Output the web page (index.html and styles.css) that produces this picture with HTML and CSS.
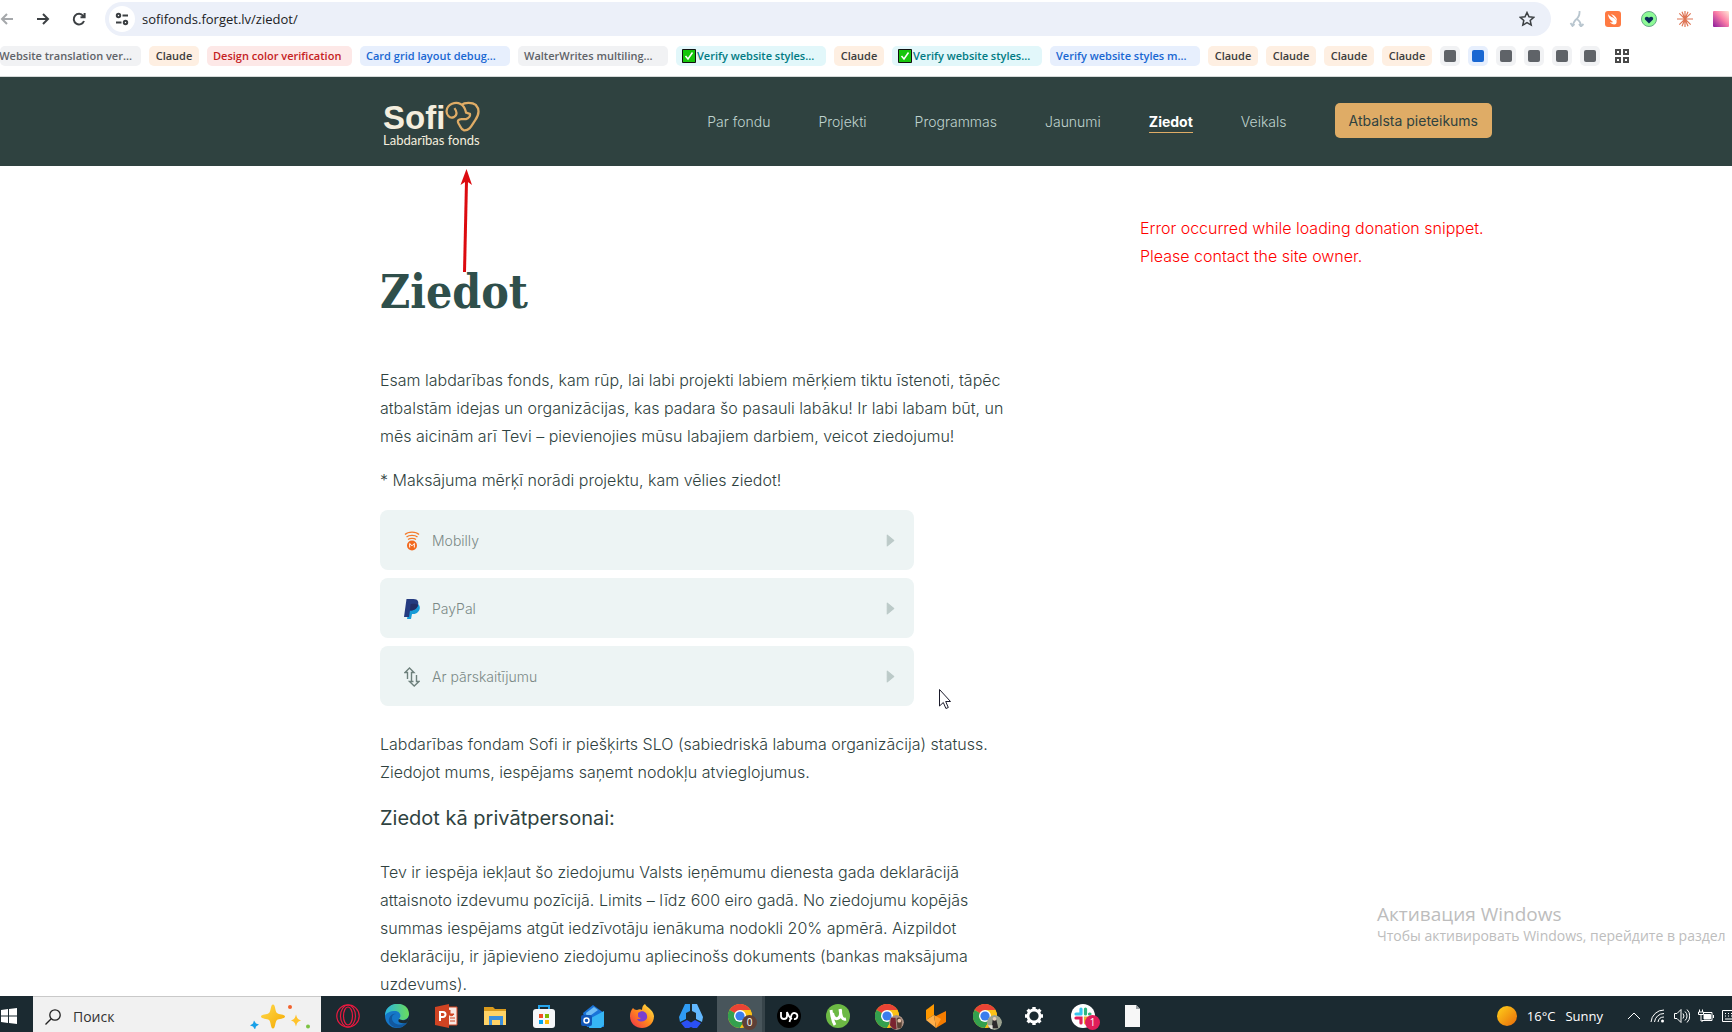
FILE: index.html
```html
<!DOCTYPE html>
<html lang="lv">
<head>
<meta charset="utf-8">
<title>Ziedot</title>
<link rel="stylesheet" href="styles.css">
</head>
<body>
<svg class="defs" aria-hidden="true">
  <defs>
    <linearGradient id="sun" x1="0" y1="0" x2="1" y2="1"><stop offset="0" stop-color="#ffd21a"/><stop offset="1" stop-color="#e86a0a"/></linearGradient>
    <linearGradient id="gold" x1="0" y1="0" x2="1" y2="1"><stop offset="0" stop-color="#ffdb4d"/><stop offset="1" stop-color="#f5a800"/></linearGradient>
    <linearGradient id="pink" x1="1" y1="0" x2="0" y2="1"><stop offset="0" stop-color="#ffe9d6"/><stop offset=".45" stop-color="#fb7ea6"/><stop offset="1" stop-color="#8a1a9c"/></linearGradient>
    <linearGradient id="fox" x1="1" y1="0" x2="0" y2="1"><stop offset="0" stop-color="#fff04a"/><stop offset=".5" stop-color="#ff8a1c"/><stop offset="1" stop-color="#f0284f"/></linearGradient>
    <linearGradient id="edge" x1="0" y1="0" x2="1" y2="0"><stop offset="0" stop-color="#28b4e0"/><stop offset="1" stop-color="#6bdc5a"/></linearGradient>
    <symbol id="chrome" viewBox="0 0 24 24">
      <circle cx="12" cy="12" r="12" fill="#fbc116"/>
      <path d="M12 12 1.6 6A12 12 0 0 1 22.4 6H12z" fill="#ea4335"/>
      <path d="M1.6 6A12 12 0 0 0 12 24l5.2-9-5.2-3z" fill="#34a04e"/>
      <path d="M12 6h10.4A12 12 0 0 1 12 24l5.2-9z" fill="#fbc116"/>
      <circle cx="12" cy="12" r="6" fill="#fff"/><circle cx="12" cy="12" r="4.6" fill="#3b7ded"/>
    </symbol>
  </defs>
</svg>

<header class="browser">
  <div class="toolbar">
    <button class="tool back" aria-label="Back"><svg viewBox="0 0 16 16"><path d="M13 8H2M7 3 2 8l5 5"/></svg></button>
    <button class="tool" aria-label="Forward"><svg viewBox="0 0 16 16"><path d="M1 8h11M7 3l5 5-5 5"/></svg></button>
    <button class="tool" aria-label="Reload"><svg viewBox="0 0 16 16"><path d="M12 10a5.300 5.300 0 1 1-.8-5.200L12.600 6M12.600 2v4.300H8.500"/></svg></button>
    <div class="omnibox">
      <button class="site" aria-label="Site information"><svg viewBox="0 0 14 14"><circle cx="3.500" cy="3.500" r="1.700"/><path d="M7.500 3.500H13M1 10.500h5.500"/><circle cx="10.500" cy="10.500" r="1.700"/></svg></button>
      <input class="url" type="text" aria-label="Address" value="sofifonds.forget.lv/ziedot/">
      <button class="star" aria-label="Bookmark"><svg viewBox="0 0 16 16"><path d="m8 1.500 2 4.300 4.700.5-3.500 3.200 1 4.600L8 11.700l-4.200 2.400 1-4.600L1.300 6.300 6 5.800z"/></svg></button>
    </div>
    <div class="extensions">
      <svg viewBox="0 0 16 16"><path d="M10.500 0C11 5 9 7 6.500 9c-1.500 1.500-2 3-3 5.500M7.500 8c2 1 4 3 4.500 6.500M1.500 12l2 3 2-2M10 13l2 2.500 2.500-2.500" fill="none" stroke="#b9c6cf" stroke-width="1.800"/></svg>
      <svg viewBox="0 0 16 16"><rect width="16" height="16" rx="3" fill="#ff7a42"/><path d="M3 3c2 3 5 3 7 5 2 1.500 2 3 1 5-2 1-5 0-6-2 1.500.5 2.500.5 3 0C5 9 3 6 3 3zM6 3c3 1 6 3 6 7-1-2-4-4-6-7z" fill="#fff"/></svg>
      <svg viewBox="0 0 16 16"><circle cx="8" cy="8" r="7.500" fill="#8dfa96" stroke="#6aa88a"/><path d="M8 12.500 4 8.500c-1-2.500 2-4 4-1.800 2-2.200 5-.7 4 1.800z" fill="#0b2a5a"/></svg>
      <svg viewBox="0 0 16 16"><path d="M8 0v16M0 8h16M2.300 2.300l11.400 11.400M13.700 2.300 2.300 13.700M5 .8l6 14.400M11 .8 5 15.200" stroke="#de7454" stroke-width="1.200"/></svg>
      <svg viewBox="0 0 16 16"><rect width="16" height="16" rx="1" fill="url(#pink)"/></svg>
    </div>
  </div>
  <nav class="tabs" aria-label="Tab groups">
    <button class="chip first">Website translation ver...</button>
    <button class="chip claude">Claude</button>
    <button class="chip red">Design color verification</button>
    <button class="chip wide blue">Card grid layout debug...</button>
    <button class="chip wide">WalterWrites multiling...</button>
    <button class="chip wide teal"><svg viewBox="0 0 14 14"><path d="M.5.500h13v13H.5z"/><path d="m3.500 7 2.500 3 4.500-6.500"/></svg>Verify website styles...</button>
    <button class="chip claude">Claude</button>
    <button class="chip wide teal"><svg viewBox="0 0 14 14"><path d="M.5.500h13v13H.5z"/><path d="m3.500 7 2.500 3 4.500-6.500"/></svg>Verify website styles...</button>
    <button class="chip wide blue">Verify website styles m...</button>
    <button class="chip claude">Claude</button>
    <button class="chip claude">Claude</button>
    <button class="chip claude">Claude</button>
    <button class="chip claude">Claude</button>
    <button class="chip dot" aria-label="Group 1"></button>
    <button class="chip dot blue" aria-label="Group 2"></button>
    <button class="chip dot" aria-label="Group 3"></button>
    <button class="chip dot" aria-label="Group 4"></button>
    <button class="chip dot" aria-label="Group 5"></button>
    <button class="chip dot" aria-label="Group 6"></button>
    <button class="all" aria-label="All groups"><svg viewBox="0 0 14 14"><path d="M1 1h4v4H1zM9 1h4v4H9zM1 9h4v4H1zM9 9h4v4H9z"/></svg></button>
  </nav>
</header>

<div class="page">
  <header class="masthead">
    <a class="logo" href="#">
      <span class="mark">Sofi<svg viewBox="0 0 108 96"><path d="M29 22c8 10 10 22-2 28C14 56 3 42 5 29 8 9 32 1 48 9c14 7 14 17 17 27l12 4c3 12-12 18-24 16-12-1-16 6-11 14 6 8 6 18 17 21 18 1 24-17 34-31 12-17 14-35 2-48C84 3 60 4 51 12"/></svg></span>
      <span class="tagline">Labdarības fonds</span>
    </a>
    <nav class="menu">
      <a href="#">Par fondu</a>
      <a href="#">Projekti</a>
      <a href="#">Programmas</a>
      <a href="#">Jaunumi</a>
      <a href="#" class="current">Ziedot</a>
      <a href="#">Veikals</a>
      <a href="#" class="apply">Atbalsta pieteikums</a>
    </nav>
  </header>

  <main class="content">
    <article>
      <h1>Ziedot</h1>
      <p>Esam labdarības fonds, kam rūp, lai labi projekti labiem mērķiem tiktu īstenoti, tāpēc atbalstām idejas un organizācijas, kas padara šo pasauli labāku! Ir labi labam būt, un mēs aicinām arī Tevi – pievienojies mūsu labajiem darbiem, veicot ziedojumu!</p>
      <p>* Maksājuma mērķī norādi projektu, kam vēlies ziedot!</p>
      <div class="methods">
        <button class="method">
          <svg class="brand" viewBox="0 0 16 20"><path d="M1 3.500C4 .3 12 .3 15 3.500M2.500 6C5 3.800 11 3.800 13.500 6M4 8.500c2-1.500 6-1.500 8 0" fill="none" stroke="#f47a2a" stroke-width="1.300"/><circle cx="8" cy="14.500" r="5" fill="#f26a1f"/><path d="M5.700 16.500v-4L8 14.800l2.300-2.300v4" fill="none" stroke="#fff" stroke-width="1"/></svg>
          <span>Mobilly</span>
          <svg class="caret" viewBox="0 0 8 12"><path d="M1 1v10l6-5z"/></svg>
        </button>
        <button class="method">
          <svg class="brand" viewBox="0 0 16 20"><path d="M6 5h8c4 3 1 10-5 10H8l-1 5H3z" fill="#179bd7"/><path d="M2.500 0h7C14 0 15 3 14 6c-1 4-4 5.500-8 5.500L5 18H0z" fill="#253b80"/><path d="M6.500 5.200C9 4.500 12 4.600 14 6c-1 4-4 5.500-8 5.500z" fill="#222d65"/></svg>
          <span>PayPal</span>
          <svg class="caret" viewBox="0 0 8 12"><path d="M1 1v10l6-5z"/></svg>
        </button>
        <button class="method">
          <svg class="brand" viewBox="0 0 16 20"><path d="M3.500 12V5.500H1L5.500 1 10 5.500H7.500V14.500H5.500l4.700 4.500 4.800-4.500h-2.500V8M9.500 14.500H7.500" fill="none" stroke="#6e807c" stroke-width="1.400"/></svg>
          <span>Ar pārskaitījumu</span>
          <svg class="caret" viewBox="0 0 8 12"><path d="M1 1v10l6-5z"/></svg>
        </button>
      </div>
      <p>Labdarības fondam Sofi ir piešķirts SLO (sabiedriskā labuma organizācija) statuss. Ziedojot mums, iespējams saņemt nodokļu atvieglojumus.</p>
      <h2>Ziedot kā privātpersonai:</h2>
      <p>Tev ir iespēja iekļaut šo ziedojumu Valsts ieņēmumu dienesta gada deklarācijā attaisnoto izdevumu pozīcijā. Limits – līdz 600 eiro gadā. No ziedojumu kopējās summas iespējams atgūt iedzīvotāju ienākuma nodokli 20% apmērā. Aizpildot deklarāciju, ir jāpievieno ziedojumu apliecinošs dokuments (bankas maksājuma uzdevums).</p>
    </article>
    <aside class="error">Error occurred while loading donation snippet. Please contact the site owner.</aside>
  </main>

  <svg class="arrow" viewBox="0 0 12 104"><path d="M4.500 103 6.500 12" stroke="#dc0a0f" stroke-width="3"/><path d="M6.500 0 12 16 6.500 12 .5 16z" fill="#dc0a0f"/></svg>
  <svg class="cursor" viewBox="0 0 12 20"><path d="M.5.500v16.500l3.800-3.500 2.600 6 2.400-1-2.600-6H11.500z" fill="#fff" stroke="#1a1a2a"/></svg>
  <div class="activation"><strong>Активация Windows</strong><span>Чтобы активировать Windows, перейдите в раздел</span></div>
</div>

<footer class="taskbar">
  <button class="start" aria-label="Start"><svg viewBox="0 0 16 16"><path d="M0 2l7-1v6.500H0zM8 1l8-1v7.500H8zM0 8.500h7V15l-7-1zM8 8.500h8V16l-8-1z" fill="#fff"/></svg></button>
  <label class="search">
    <svg class="lens" viewBox="0 0 16 16"><circle cx="10" cy="6" r="5.200"/><path d="M6.200 9.800.5 15.500"/></svg>
    <input type="text" placeholder="Поиск" aria-label="Поиск">
    <svg class="sparkle" viewBox="0 0 60 24"><path d="M23 0c2.500 0 2 7 4 8.500 1.500 2 8 1 8 3.500s-6.500 2-8 3.500C25 17 25.500 24 23 24s-2-7-4-8.500C17.500 14 11 14.500 11 12s6.500-1.500 8-3.500C21 7 20.500 0 23 0z" fill="url(#gold)"/><path d="M46 10c1 4 2 5 5 6-3 1-4 2-5 6-1-4-2-5-5-6 3-1 4-2 5-6z" fill="#ffc32b"/><path d="m4 16 2 3 3 1-3 2-1 3-2-3-3-1 3-2z" fill="#18a0e8"/><circle cx="40" cy="2.500" r="2" fill="#f2622e"/><circle cx="58" cy="22" r="2" fill="#7cc242"/></svg>
  </label>
  <div class="apps">
    <button aria-label="Opera"><svg viewBox="0 0 24 24"><g fill="none" stroke="#e8193f" stroke-width="1.200"><circle cx="12" cy="12" r="11.200"/><ellipse cx="12" cy="12" rx="7.500" ry="11"/><ellipse cx="12" cy="12" rx="4.500" ry="9"/></g></svg></button>
    <button aria-label="Edge"><svg viewBox="0 0 24 24"><circle cx="12" cy="12" r="12" fill="#1577c8"/><path d="M0 12C0-4 24-4 24 10c0 6-7 7-10 5 3-3 1-8-4-8C5 7 1 9 0 12z" fill="url(#edge)"/><path d="M7 14c0 6 8 9 15 4-5 9-16 6-18 0-1-5 3-9 7-8-3 0-4 2-4 4z" fill="#12589e"/><path d="M14 15c3 2 9 2 10-4 0 6-1 7-3 8-6 1-9-1-7-4z" fill="#1b2a31"/></svg></button>
    <button aria-label="PowerPoint"><svg viewBox="0 0 24 24"><path d="M13 3h10v18H13z" fill="#f8e9e4" stroke="#d04423"/><path d="M16 6a3 3 0 1 0 4 4h-4zM16 14h5M16 17h5" fill="#d04423" stroke="#d04423"/><path d="m1 3 14-3v24L1 21z" fill="#d04423"/><path d="M6 17V8h3a2.500 2.500 0 0 1 0 5H6" fill="none" stroke="#fff" stroke-width="2"/></svg></button>
    <button aria-label="Explorer"><svg viewBox="0 0 24 24"><path d="M1 3h9l2 2h11v16H1z" fill="#d99a1c"/><path d="M1 7h22v14H1z" fill="#ffd366"/><path d="M6 21v-9h14v9h-3v-5H9v5z" fill="#3c8fdc"/></svg></button>
    <button aria-label="Store"><svg viewBox="0 0 24 24"><path d="M7 7V2h10v5" fill="none" stroke="#27a5ec" stroke-width="2"/><rect y="5" x="1" width="22" height="19" rx="3" fill="#f5f7f9"/><path d="M7 10h4v4H7z" fill="#f25022"/><path d="M13 10h4v4h-4z" fill="#7fba00"/><path d="M7 16h4v4H7z" fill="#00a4ef"/><path d="M13 16h4v4h-4z" fill="#ffb900"/></svg></button>
    <button aria-label="Outlook"><svg viewBox="0 0 24 24"><path d="m2 9 10-8 11 8v14H6z" fill="#1a73d8"/><path d="m5 9 8-6 4 3-11 8z" fill="#70bdf5"/><path d="m10 14 13-7v14l-3 3H8z" fill="#36b5f4"/><rect y="11" width="11" height="11" rx="2" fill="#1257b8"/><circle cx="5.500" cy="16.500" r="2.500" fill="none" stroke="#fff" stroke-width="1.500"/></svg></button>
    <button aria-label="Firefox"><svg viewBox="0 0 24 24"><path d="M3 4c1 1 2 2 4 2 2-1 4-1 5 0 0-3 1-5 3-6 1 3 8 5 9 12 0 16-24 16-24 0 0-3 1-6 3-8z" fill="url(#fox)"/><path d="M8 9c5-4 10 0 9 5-1 4-8 5-10 1 2 0 3 0 4-1-2 0-3-1-3-2z" fill="#7a3fd0"/></svg></button>
    <button aria-label="Hub"><svg viewBox="0 0 24 24"><path d="M6 0h5v7l-4 2v6l-6 3-1-5z" fill="#2f9cf4"/><path d="M13 0h5l6 13-1 5-6-3V9l-4-2z" fill="#62b8ff"/><path d="m2 19 6-3 4 2.500 4-2.500 6 3-4 5h-4l-2-1-2 1H6z" fill="#2a50f4"/></svg></button>
    <button class="active" aria-label="Chrome"><svg viewBox="0 0 24 24"><use href="#chrome"/></svg><span class="badge brown">0</span></button>
    <button aria-label="Upwork"><svg viewBox="0 0 24 24"><circle cx="12" cy="12" r="12"/><path d="M4 8v4a3 3 0 0 0 6 0V8c1 3 3 6 5 7M12.500 18l2-7a3 3 0 1 1 2.500 4" fill="none" stroke="#fff" stroke-width="1.800"/></svg></button>
    <button aria-label="Torrent"><svg viewBox="0 0 24 24"><circle cx="12" cy="12" r="12" fill="#6cb944"/><path d="M5 6c1 6 1 10 4 15M6.500 9c1 8 9 8 8-3M14 5c1 8 2 11 6 10" fill="none" stroke="#fff" stroke-width="3"/></svg></button>
    <button aria-label="Chrome profile 2"><svg viewBox="0 0 24 24"><use href="#chrome"/></svg><svg class="badge" viewBox="0 0 16 16"><circle cx="8" cy="8" r="8" fill="#a98f82"/><path d="M2 3h5l1 12H5L1 11z" fill="#7a2430"/><path d="M8 4c4-4 7 2 5 10H9z" fill="#5a4436"/><circle cx="11" cy="6" r="2" fill="#e8c4ac"/></svg></button>
    <button aria-label="Boxes"><svg viewBox="0 0 24 24"><path d="M2 6 10 0v11l-8 5z" fill="#ff9800"/><path d="m22 7-10 5v12l10-6z" fill="#f57c00"/><path d="m10 11-8 5 10 8z" fill="#ffb04a"/><path d="m10 11 7 4-5 9z" fill="#ff9f2e"/></svg></button>
    <button aria-label="Chrome profile 3"><svg viewBox="0 0 24 24"><use href="#chrome"/></svg><svg class="badge" viewBox="0 0 16 16"><circle cx="8" cy="8" r="8" fill="#9aa18f"/><path d="M6 5h4l2 9H5z" fill="#2d2a2c"/><circle cx="8" cy="4" r="2" fill="#e6cdb8"/><path d="M1 11h5v4H4z" fill="#e5e2da"/></svg></button>
    <button aria-label="Settings"><svg viewBox="0 0 24 24"><circle cx="12" cy="12" r="6" fill="none" stroke="#fff" stroke-width="2.800"/><path d="M12 3v3M12 18v3M3 12h3M18 12h3M5.600 5.600l2 2M16.400 16.400l2 2M18.400 5.600l-2 2M7.600 16.400l-2 2" stroke="#fff" stroke-width="3.400"/></svg></button>
    <button aria-label="Slack"><svg viewBox="0 0 24 24"><circle cx="12" cy="12" r="12" fill="#fff"/><g stroke-width="3.200" stroke-linecap="round"><path d="M10 5v5M5 10h5" stroke="#36c5f0"/><path d="M14.500 5v5M19 10h-.5" stroke="#2eb67d"/><path d="M5 14h5v5" stroke="#e01e5a" fill="none"/><path d="M14.500 19v-5H19" stroke="#ecb22e" fill="none"/></g></svg><span class="badge pink">1</span></button>
    <button aria-label="Document"><svg viewBox="0 0 24 24"><path d="M5 1h11l4 4v18H5z" fill="#f7f7f7"/><path d="M16 1v4h4z" fill="#9aa0a3"/></svg></button>
  </div>
  <div class="tray">
    <button class="weather"><svg viewBox="0 0 20 20"><circle cx="10" cy="10" r="10" fill="url(#sun)"/></svg><span>16°C</span><span>Sunny</span></button>
    <svg viewBox="0 0 16 16"><path d="m2 11 6-6 6 6"/></svg>
    <svg viewBox="0 0 16 16"><path d="M1 14A13 13 0 0 1 14 2M4.500 14A9.500 9.500 0 0 1 14 5.500M8 14a6 6 0 0 1 6-5"/><circle cx="12.500" cy="13" r="1.500" fill="#fff" stroke="none"/></svg>
    <svg viewBox="0 0 16 16"><path d="M.5 5.500H3l4-4v13l-4-4H.5zM9 5.500a4 4 0 0 1 0 5M11 3.500a6 6 0 0 1 0 9M13 1.500a9 9 0 0 1 0 13"/></svg>
    <svg viewBox="0 0 16 16"><path d="M1.500 1.500V4M4.500 1.500V4M.5 4h5v2.500h-5zM3 6.500V13h2M5.500 4.500H14v8H4"/><path d="M6 6.500h6.500v4.500H6z" fill="#fff"/><path d="M15.500 7v3"/></svg>
    <svg class="keyboard" viewBox="0 0 10 16"><path d="M10 2.500H.5v11H10M3 5.500h1M6 5.500h1M9 5.500h1M3 8h1M6 8h1M9 8h1M3 11h7"/></svg>
  </div>
</footer>
</body>
</html>
```
FILE: styles.css
```css
* { box-sizing: border-box; }

body {
  margin: 0;
  height: 100vh;
  display: flex;
  flex-direction: column;
  overflow: hidden;
  background: #fff;
  color: #2f4240;
  font-family: Inter, sans-serif;
}

button, input {
  font: inherit;
  color: inherit;
  border: 0;
  padding: 0;
  background: none;
}

a { color: inherit; text-decoration: none; }
svg { flex: none; display: block; }
.defs { position: absolute; width: 0; height: 0; }

/* Browser chrome */
.browser {
  flex: none;
  border-bottom: 1px solid #d5dad9;
  font-family: "Open Sans", "Noto Sans", sans-serif;
}

.toolbar {
  display: flex;
  align-items: center;
  height: 38px;
}

.tool { margin-right: 20px; }
.tool svg { width: 16px; height: 16px; }
.tool path, .site svg, .star path { fill: none; stroke: #3c4043; stroke-width: 2; }
.tool.back path { stroke: #a5a8ab; }
.tool:nth-child(3) { margin-right: 17px; }

.omnibox {
  flex: 1;
  display: flex;
  align-items: center;
  height: 34px;
  padding: 0 16px 0 4px;
  border-radius: 17px;
  background: #ecf0f9;
}

.site {
  display: grid;
  place-items: center;
  width: 26px;
  height: 26px;
  border-radius: 50%;
  background: #fff;
}

.site svg { width: 14px; height: 14px; }
.url { flex: 1; margin-left: 7px; font-size: 13px; color: #202124; }
.star svg { width: 16px; height: 16px; }
.star path { stroke-width: 1.5px; }

.extensions { display: flex; gap: 20px; padding: 0 3px 0 18px; }
.extensions svg { width: 16px; height: 16px; }

.tabs {
  display: flex;
  align-items: center;
  gap: 8px;
  height: 38px;
  padding-bottom: 2px;
}

.chip {
  flex: none;
  display: flex;
  align-items: center;
  height: 20px;
  padding: 0 6px 2px;
  border-radius: 5px;
  background: #f1f2f4;
  color: #5f6368;
  font-size: 11px;
  font-weight: 600;
  white-space: nowrap;
  overflow: hidden;
}

.chip.first { width: 141px; padding: 0 9px 2px 0; justify-content: flex-end; }
.chip.claude { width: 50px; justify-content: center; background: #feefe2; color: #3c3c3c; }
.chip.wide { width: 150px; }
.chip.red { width: 145px; background: #fde8e7; color: #c5221f; }
.chip.blue { background: #e7effd; color: #1967d2; }
.chip.teal { background: #e2f7fa; color: #007b83; }
.chip.teal svg { width: 14px; height: 14px; margin: 2px 1px 0 0; }
.chip.teal path { fill: #16c60c; stroke: #111; }
.chip.teal path + path { fill: none; stroke: #fff; stroke-width: 1.5px; }
.chip.dot { width: 20px; padding: 0; justify-content: center; }
.chip.dot::before { content: ""; flex: none; width: 12px; height: 12px; border-radius: 2px; background: currentColor; }
.all { margin-left: 7px; }
.all svg { width: 14px; height: 14px; fill: none; stroke: #4a4a4a; stroke-width: 2; }

/* Site */
.page {
  flex: 1;
  min-height: 0;
  position: relative;
  overflow: hidden;
}

.masthead {
  display: flex;
  justify-content: space-between;
  height: 89px;
  padding: 24px 240px 0 383px;
  background: #2f4240;
}

.logo { color: #f4eede; }

.mark {
  display: flex;
  align-items: flex-start;
  height: 33px;
  font-family: "Liberation Sans", Arial, sans-serif;
  font-size: 33px;
  font-weight: 700;
  line-height: 33px;
}

.mark svg { width: 35px; height: 31px; fill: none; stroke: #dfac66; stroke-width: 7; }
.tagline { display: block; font-family: Lato, sans-serif; font-size: 13px; line-height: 12px; }

.menu {
  display: flex;
  align-items: flex-start;
  gap: 48px;
  padding-top: 2px;
  font-size: 14px;
  font-weight: 300;
  line-height: 20px;
  color: #bfd2ce;
}

.menu a { padding-top: 9px; }
.menu .current { color: #fff; font-weight: 700; border-bottom: 1px solid #dfac66; }
.menu .apply {
  padding: 8px 14px 7px;
  border-radius: 5px;
  background: #dfac66;
  color: #2f4240;
  font-weight: 400;
}

.content {
  display: grid;
  grid-template-columns: 632px 352px;
  justify-content: space-between;
  padding: 48px 240px 0 380px;
  font-size: 16px;
  font-weight: 300;
  line-height: 28px;
}

h1 {
  margin: 48px 0 44px;
  font-family: "DejaVu Serif Condensed", "DejaVu Serif", serif;
  font-size: 46px;
  font-weight: 700;
  line-height: 60px;
  color: #2f4f4b;
}

p { margin: 0 0 16px; }
h2 { margin: 0 0 24px; font-size: 20px; font-weight: 400; line-height: 32px; }

.methods { display: grid; gap: 8px; width: 534px; margin-bottom: 24px; }

.method {
  display: flex;
  align-items: center;
  gap: 12px;
  height: 60px;
  padding: 0 19px 0 24px;
  border-radius: 8px;
  background: #edf4f4;
  color: #7b8986;
  font-size: 14px;
}

.method span { flex: 1; text-align: left; padding-top: 2px; }
.brand { width: 16px; height: 20px; margin-top: 2px; }
.caret { width: 9px; height: 13px; fill: #bccac8; stroke: #bccac8; stroke-linejoin: round; }
.error { color: #f00; }

/* Things lying over the page */
.arrow { position: absolute; left: 460px; top: 92px; width: 12px; height: 104px; }
.cursor { position: absolute; left: 939px; top: 612px; width: 12px; height: 20px; }

.activation {
  position: absolute;
  right: 0;
  bottom: 50px;
  width: 355px;
  font-family: "Open Sans", "Noto Sans", sans-serif;
  font-size: 14px;
  line-height: 20px;
  color: #bdbdbd;
  white-space: nowrap;
}

.activation strong { display: block; font-size: 19px; font-weight: 400; line-height: 24px; }

/* Taskbar */
.taskbar {
  flex: none;
  display: flex;
  height: 36px;
  overflow: hidden;
  background: #1b2a31;
  color: #fff;
  font-family: "Open Sans", "Noto Sans", sans-serif;
  font-size: 14px;
}

.start { width: 33px; padding: 4px 0 0 1px; }
.start svg { width: 16px; height: 16px; }

.search {
  display: flex;
  align-items: center;
  width: 288px;
  padding: 4px 11px 0 12px;
  border-top: 1px solid #c9c9c9;
  background: #f1f1f1;
  color: #222;
}

.search input { flex: 1; min-width: 0; margin-left: 12px; }
.search input::placeholder { color: #333; opacity: 1; }
.lens { width: 16px; height: 16px; fill: none; stroke: #222; stroke-width: 1.3px; }
.sparkle { width: 60px; height: 25px; }

.apps { display: flex; gap: 4px; padding-left: 4px; }

.apps button {
  position: relative;
  display: grid;
  place-items: center;
  width: 45px;
  padding-top: 4px;
}

.apps svg { width: 24px; height: 24px; }
.apps .active { background: #48555b; box-shadow: 3px 0 #37444a; }

.apps .badge {
  position: absolute;
  right: 5px;
  bottom: 2px;
  width: 15px;
  height: 15px;
  border-radius: 50%;
  font-size: 10px;
  line-height: 15px;
  text-align: center;
}

.brown { background: #5d4037; }
.pink { background: #e01e5a; }

.tray {
  display: flex;
  align-items: center;
  gap: 8px;
  margin-left: auto;
  padding-top: 4px;
}

.tray svg { width: 16px; height: 16px; fill: none; stroke: #fff; }
.weather { display: flex; align-items: center; gap: 10px; margin-right: 15px; font-size: 13px; }
.tray .weather svg { width: 20px; height: 20px; stroke: none; }
.tray .keyboard { width: 10px; }
```
